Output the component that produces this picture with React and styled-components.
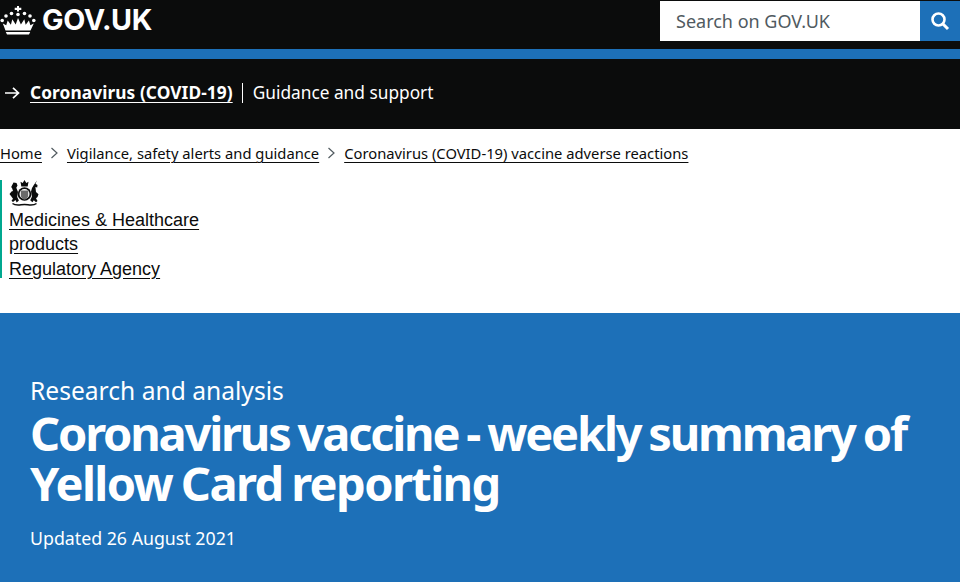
import React from "react";
import styled, { createGlobalStyle } from "styled-components";

const Global = createGlobalStyle`
  html, body { margin: 0; padding: 0; background: #fff; }
  body { font-family: "Noto Sans", "Liberation Sans", sans-serif; color: #0b0c0c; overflow: hidden; }
`;
const Page = styled.div`width: 960px; height: 582px; overflow: hidden;`;
const Header = styled.header`
  height: 49px; background: #0b0c0c; display: flex; justify-content: space-between; align-items: flex-start;
`;
const Logo = styled.a`
  display: flex; align-items: center; gap: 6px; height: 37px; color: #fff; padding-top: 1px;
  font: 700 28.7px/37px "Inter", "Liberation Sans", sans-serif; letter-spacing: -0.4px;
`;
const Search = styled.form`display: flex; margin-top: 1px; height: 40px;`;
const SearchBox = styled.div`
  width: 260px; background: #fff; color: #505a5f; padding-left: 16px; box-sizing: border-box;
  font-size: 18px; line-height: 40px;
`;
const SearchButton = styled.div`
  width: 40px; background: #1d70b8; display: flex; align-items: center; justify-content: center;
`;
const BlueBar = styled.div`height: 10px; background: #1d70b8;`;
const Banner = styled.div`
  height: 70px; background: #0b0c0c; color: #fff; display: flex; align-items: center; padding: 0 0 3px 4px; box-sizing: border-box; font-size: 17.3px;
`;
const BannerLink = styled.a`
  font-weight: 700; margin-left: 10px; padding-right: 9px; letter-spacing: 0.09px; text-decoration: underline; text-underline-offset: 3px;
`;
const BannerText = styled.span`
  border-left: 1px solid #fff; padding-left: 10px; line-height: 20px;
`;
const Crumbs = styled.nav`
  height: 48px; display: flex; align-items: center; font-size: 14.75px; box-sizing: border-box;
`;
const Crumb = styled.a`text-decoration: underline; text-underline-offset: 3px;`;
const Chevron = styled.svg`width: 9px; height: 12px; margin: 0 8px;`;
const OrgRow = styled.div`height: 136px; padding-top: 3px; box-sizing: border-box;`;
const Org = styled.div`
  width: 200px; border-left: 2px solid #00a88f; padding-left: 7px; height: 98px;
  font: 18px/24.5px "Liberation Sans", Arial, sans-serif;
`;
const OrgLink = styled.a`
  text-decoration: underline; text-underline-offset: 3px; display: block; width: fit-content;
`;
const Crest = styled.svg`display: block; width: 31px; height: 27px; margin-bottom: 0.6px;`;
const Hero = styled.section`
  height: 269px; background: #1d70b8; color: #fff; padding: 61px 30px 0; box-sizing: border-box;
`;
const Kicker = styled.div`font-size: 24.6px; line-height: 33px;`;
const Title = styled.h1`
  margin: 1px 0 0; font-size: 47px; line-height: 50px; font-weight: 700; word-spacing: -2px; white-space: nowrap;
`;
const TitleLine = styled.span`
  display: block; letter-spacing: ${(p) => p.$tracking}px;
`;
const Updated = styled.div`font-size: 17.75px; line-height: 24px; margin-top: 18px;`;

const Crown = () => (
  <svg width="36" height="32" viewBox="0 0 36 32" fill="#fff" aria-hidden="true">
    <path d="M17 7.500V6h-2.300V3.800H17V2h2v1.800h2.300V6H19v1.500z" />
    <circle cx="18" cy="10.500" r="1.800" />
    <circle cx="11.500" cy="9.500" r="1.800" />
    <circle cx="24.500" cy="9.500" r="1.800" />
    <circle cx="6" cy="12" r="1.800" />
    <circle cx="30" cy="12" r="1.800" />
    <circle cx="2.200" cy="16.500" r="1.800" />
    <circle cx="33.800" cy="16.500" r="1.800" />
    <path d="M7 30.500h22l1.200-2.600H5.800zM5.500 26.600h25l3.300-7.200-3.400 1.800-1.500-4.600-3.200 4.200-1.400-5.600-3.400 5.400L18 14l-2.300 6.600-3.400-5.400-1.400 5.600-3.200-4.200-1.500 4.600-3.400-1.800z" />
  </svg>
);

const ArrowIcon = () => (
  <svg width="16" height="14" viewBox="0 0 16 14" fill="none" stroke="#fff" strokeWidth="1.7" aria-hidden="true">
    <path d="M1 7h13.500M9 1.800L14.500 7 9 12.200" />
  </svg>
);

const SearchIcon = () => (
  <svg width="20" height="20" viewBox="0 0 20 20" fill="none" stroke="#fff" aria-hidden="true">
    <circle cx="8.500" cy="8.500" r="6" strokeWidth="2.600" />
    <path d="M13 13l5 5" strokeWidth="3" />
  </svg>
);

const CrumbChevron = () => (
  <Chevron viewBox="0 0 9 12" fill="none" stroke="#505a5f" strokeWidth="1.200" aria-hidden="true">
    <path d="M1.500 1l5.500 5-5.500 5" />
  </Chevron>
);

const RoyalArms = () => (
  <Crest viewBox="0 0 31 27" aria-hidden="true">
    <path fill="#0b0c0c" d="M12.300 6.500L11.500 1.800l2.200 1.200L15.500 0l1.800 3 2.200-1.200-.8 4.700z" />
    <circle cx="15.500" cy="14" r="6.800" fill="#0b0c0c" />
    <circle cx="15.500" cy="14" r="5" fill="#fff" />
    <path fill="#6a6a6a" d="M11.800 10.500h7.400v5c0 2.400-2 3.600-3.700 4.300-1.700-.7-3.700-1.900-3.700-4.300z" />
    <path fill="#0b0c0c" d="M4.500 2.500l3 .5 1 2.500-1.200 2.200L9 12l-.8 5 1.700 3.500-2.200 2-1.200-2.400L4 22l-1.500-1.200 1.500-2-1.800-2.500L.5 14l2-2.500 1.500-.5-.8-2.500-1-1.500z" />
    <path fill="#0b0c0c" d="M28 .5l-1.500 3.300 2 1.200-.3 2.500-1.800-.6L27 12l2.500 2.300-1 2.700-1.500 1.300L28.500 21l-1.500 1.300-2.200-2-1.400 2-2.200-2 1.700-3.500L22 11.500l1-3.500 1.800-3z" />
    <path fill="none" stroke="#0b0c0c" strokeWidth="1.500" d="M3.500 23.500c3.500 2.800 8 1 12 1s8.500 1.800 12-1" />
  </Crest>
);

export default function App() {
  return (
    <Page>
      <Global />
      <Header>
        <Logo><Crown />GOV.UK</Logo>
        <Search>
          <SearchBox>Search on GOV.UK</SearchBox>
          <SearchButton><SearchIcon /></SearchButton>
        </Search>
      </Header>
      <BlueBar />
      <Banner>
        <ArrowIcon />
        <BannerLink>Coronavirus (COVID-19)</BannerLink>
        <BannerText>Guidance and support</BannerText>
      </Banner>
      <Crumbs>
        <Crumb>Home</Crumb>
        <CrumbChevron />
        <Crumb>Vigilance, safety alerts and guidance</Crumb>
        <CrumbChevron />
        <Crumb>Coronavirus (COVID-19) vaccine adverse reactions</Crumb>
      </Crumbs>
      <OrgRow>
        <Org>
          <RoyalArms />
          <OrgLink>Medicines &amp; Healthcare</OrgLink>
          <OrgLink>products</OrgLink>
          <OrgLink>Regulatory Agency</OrgLink>
        </Org>
      </OrgRow>
      <Hero>
        <Kicker>Research and analysis</Kicker>
        <Title>
          <TitleLine $tracking={-2.2}>Coronavirus vaccine - weekly summary of</TitleLine>
          <TitleLine $tracking={-1.6}>Yellow Card reporting</TitleLine>
        </Title>
        <Updated>Updated 26 August 2021</Updated>
      </Hero>
    </Page>
  );
}
